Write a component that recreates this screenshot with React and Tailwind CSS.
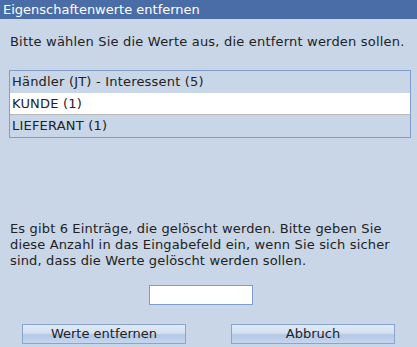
import React, { useState } from 'react';

const rows = [
  { label: 'Händler (JT) - Interessent (5)', selected: false },
  { label: 'KUNDE (1)', selected: true },
  { label: 'LIEFERANT (1)', selected: false },
];

const btn =
  'w-[164px] h-[20px] border border-[#8aa5cd] text-[13px] text-[#222] bg-[linear-gradient(to_bottom,#e0e9f6_0%,#d3e0f2_45%,#b3c8e6_55%,#c6d6ee_100%)]';

const App = () => {
  const [count, setCount] = useState('');

  return (
    <div className="w-[417px] h-[347px] bg-[#c9d6e7] text-[#222] text-[13px] leading-[16px] font-['DejaVu_Sans',Verdana,sans-serif] flex flex-col">
      {/* Title bar */}
      <div className="h-[19px] bg-[#4a6da7] text-white pl-[3px] flex items-center">
        Eigenschaftenwerte entfernen
      </div>

      <div className="px-[10px] pt-[15px] tracking-[0.2px]">
        <p>Bitte wählen Sie die Werte aus, die entfernt werden sollen.</p>
      </div>

      {/* Value list */}
      <div className="mt-[20px] ml-[9px] w-[402px] border border-[#7f9dca] tracking-[0.2px]">
        {rows.map((row, i) => (
          <div
            key={i}
            className={
              row.selected
                ? 'h-[22px] pl-[2px] flex items-center bg-white border-b border-[#b9b9b9]'
                : 'h-[22px] pl-[2px] flex items-center'
            }
          >
            {row.label}
          </div>
        ))}
      </div>

      <div className="px-[10px] mt-[83px] tracking-[0.15px]">
        <p>
          Es gibt 6 Einträge, die gelöscht werden. Bitte geben Sie diese Anzahl in das Eingabefeld ein, wenn Sie
          sich sicher sind, dass die Werte gelöscht werden sollen.
        </p>
      </div>

      <div className="mt-[16px] flex justify-center">
        <input
          type="text"
          value={count}
          onChange={(e) => setCount(e.target.value)}
          className="w-[104px] h-[20px] ml-[-16px] bg-white border border-[#7f9dca] outline-none px-1 text-[13px]"
        />
      </div>

      <div className="mt-[19px] flex pl-[22px] gap-[45px]">
        <button className={btn}>Werte entfernen</button>
        <button className={btn}>Abbruch</button>
      </div>
    </div>
  );
};

export default App;
